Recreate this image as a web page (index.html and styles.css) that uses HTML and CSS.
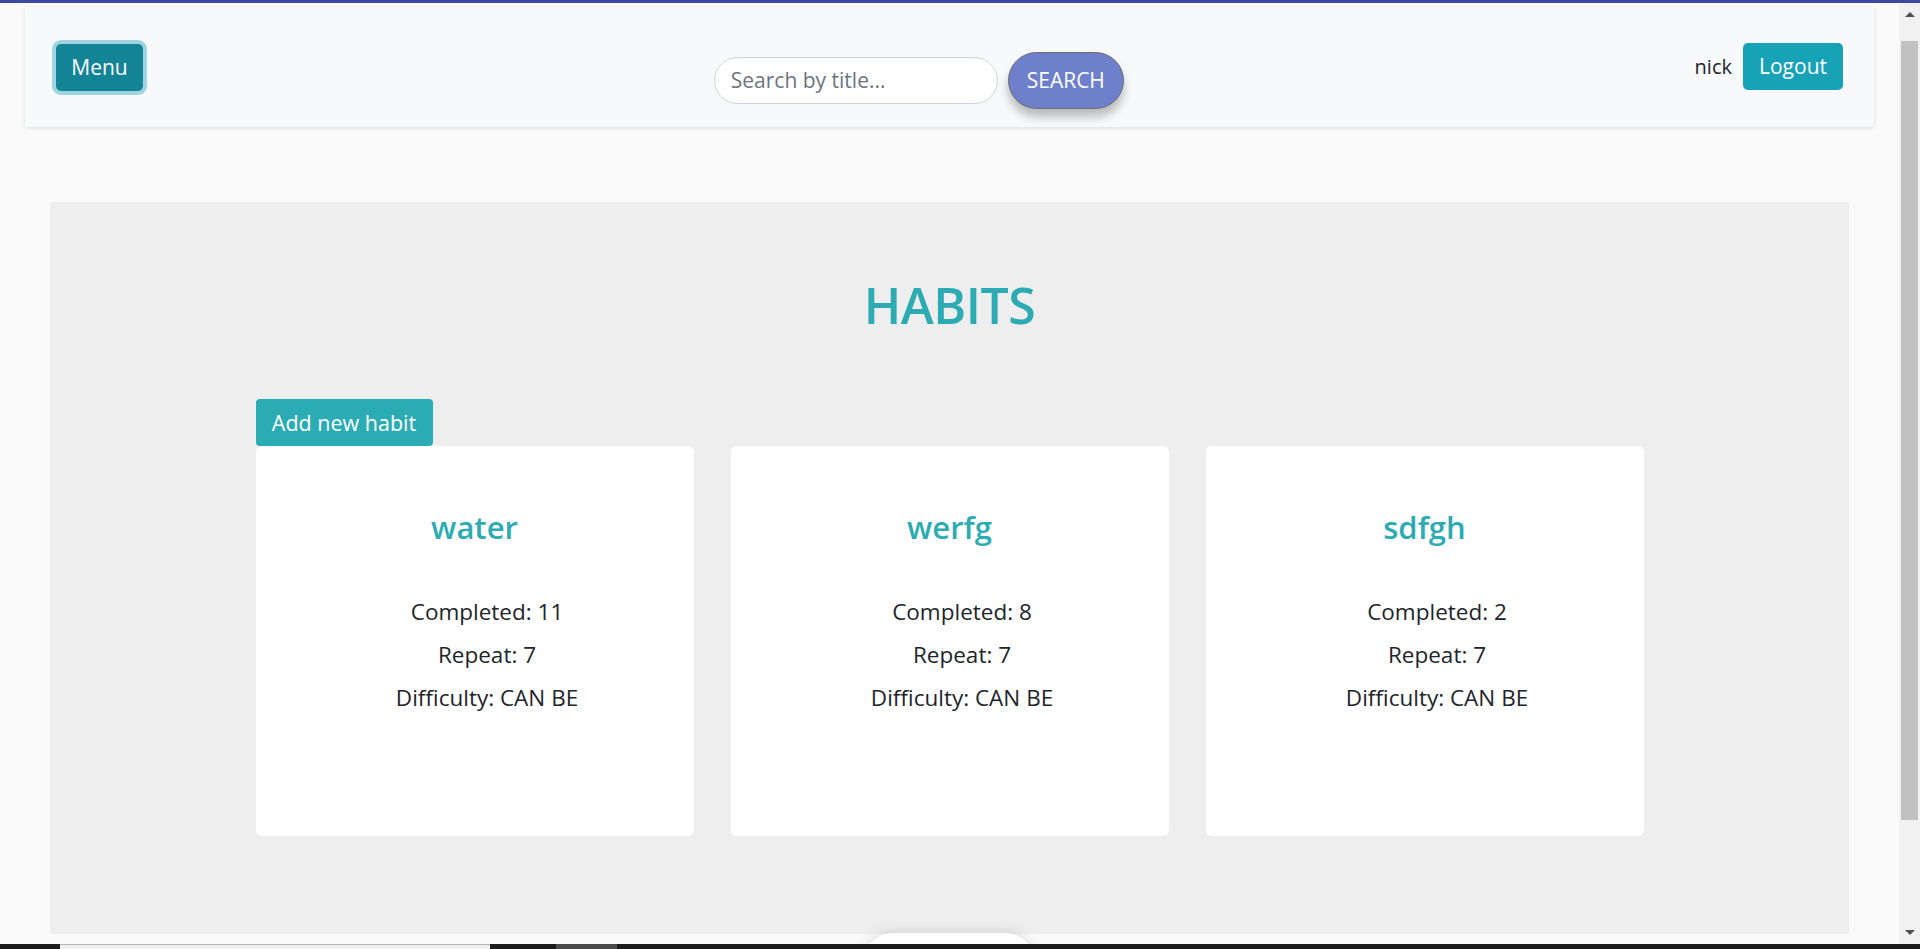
FILE: index.html
```html
<!DOCTYPE html>
<html lang="en">
<head>
<meta charset="utf-8">
<title>Habits</title>
<link rel="stylesheet" href="styles.css">
</head>
<body>
  <div class="topline"></div>
  <div class="window">
    <div class="viewport">
      <nav class="navbar">
        <div class="nav-left">
          <button class="btn btn-menu">Menu</button>
        </div>
        <div class="nav-mid">
          <form class="search">
            <input class="search-input" type="text" placeholder="Search by title...">
            <button class="btn-search" type="button">SEARCH</button>
          </form>
        </div>
        <div class="nav-right">
          <span class="user">nick</span>
          <button class="btn btn-logout">Logout</button>
        </div>
      </nav>

      <main class="panel">
        <h1 class="title">HABITS</h1>
        <div class="container">
          <button class="btn btn-add">Add new habit</button>
          <div class="cards">
            <div class="card">
              <h2 class="card-title">water</h2>
              <p class="line">Completed: 11</p>
              <p class="line">Repeat: 7</p>
              <p class="line">Difficulty: CAN BE</p>
            </div>
            <div class="card">
              <h2 class="card-title">werfg</h2>
              <p class="line">Completed: 8</p>
              <p class="line">Repeat: 7</p>
              <p class="line">Difficulty: CAN BE</p>
            </div>
            <div class="card">
              <h2 class="card-title">sdfgh</h2>
              <p class="line">Completed: 2</p>
              <p class="line">Repeat: 7</p>
              <p class="line">Difficulty: CAN BE</p>
            </div>
          </div>
        </div>
      </main>
      <div class="fab"></div>
    </div>
    <div class="scrollbar">
      <div class="sb-btn"><span class="arrow-up"></span></div>
      <div class="sb-track"><div class="sb-thumb"></div></div>
      <div class="sb-btn"><span class="arrow-down"></span></div>
    </div>
  </div>
  <div class="taskbar">
    <div class="tb-light"></div>
    <div class="tb-gray"></div>
  </div>
</body>
</html>
```

FILE: styles.css
```css
* { box-sizing: border-box; }

html, body {
  margin: 0;
  padding: 0;
  height: 949px;
  overflow: hidden;
}

body {
  display: flex;
  flex-direction: column;
  background: #fafafa;
  font-family: "Open Sans", "Liberation Sans", sans-serif;
  color: #212529;
}

.topline {
  height: 3px;
  flex: none;
  background: #3d47a6;
}

.window {
  flex: 1;
  display: flex;
  min-height: 0;
}

.viewport {
  flex: 1;
  position: relative;
  overflow: hidden;
  background: #fafafa;
}

/* Navbar */
.navbar {
  margin: 4px 25px 0;
  height: 120px;
  background: #f8f9fa;
  box-shadow: 0 1px 4px rgba(0, 0, 0, 0.12);
  display: flex;
  align-items: center;
  padding: 0 31px 0 31px;
}

.btn {
  border: none;
  font-family: inherit;
  font-size: 21px;
  color: #fff;
  height: 47px;
  border-radius: 5px;
  padding: 0 12px;
  cursor: pointer;
  white-space: nowrap;
}

.btn-menu {
  width: 87px;
  background: #138496;
  box-shadow: 0 0 0 4px #9fd5e0;
}

.nav-mid {
  flex: 1;
  display: flex;
  justify-content: center;
  padding-top: 26px;
}

.search {
  display: flex;
  align-items: center;
  gap: 10px;
  margin: 0;
}

.search-input {
  width: 284px;
  height: 47px;
  border: 1px solid #ced4da;
  border-radius: 24px;
  background: #fff;
  padding: 0 16px;
  font-family: inherit;
  font-size: 21px;
  color: #495057;
  outline: none;
}

.search-input::placeholder {
  color: #6c757d;
}

.btn-search {
  width: 116px;
  height: 57px;
  border: 1px solid #6d6d6d;
  border-radius: 29px;
  background: #6e7fcb;
  color: #fff;
  font-family: inherit;
  font-size: 21px;
  box-shadow: 0 8px 10px rgba(0, 0, 0, 0.25);
  padding: 0;
}

.nav-right {
  display: flex;
  align-items: center;
  gap: 11px;
  margin-top: -2px;
}

.user {
  font-size: 20px;
  color: #212529;
}

.btn-logout {
  width: 100px;
  background: #17a2b8;
}

/* Panel */
.panel {
  margin: 75px 50px 0;
  height: 732px;
  background: #eeeeee;
  padding-top: 73px;
}

.title {
  margin: 0;
  text-align: center;
  font-size: 50px;
  line-height: 60px;
  font-weight: 600;
  color: #2cabb3;
  letter-spacing: -0.5px;
}

.container {
  width: 1388px;
  margin: 64px auto 0;
}

.btn-add {
  display: block;
  width: 177px;
  background: #2babb3;
  border-radius: 4px;
  padding: 0;
  font-size: 21.5px;
}

.cards {
  display: grid;
  grid-template-columns: repeat(3, 1fr);
  gap: 37px;
}

.card {
  height: 390px;
  background: #fff;
  border-radius: 6px;
  padding-top: 63px;
  text-align: center;
}

.card-title {
  margin: 0 0 45px;
  font-size: 31px;
  line-height: 36px;
  font-weight: 600;
  color: #2cabb3;
}

.line {
  margin: 0;
  padding-left: 25px;
  font-size: 22.5px;
  line-height: 43px;
  color: #212529;
}

/* floating bump at the bottom */
.fab {
  position: absolute;
  left: 863px;
  top: 930px;
  width: 172px;
  height: 60px;
  border-radius: 30px;
  background: #fff;
  box-shadow: 0 0 14px rgba(0, 0, 0, 0.14);
}

/* Fake scrollbar */
.scrollbar {
  width: 21px;
  flex: none;
  background: #f1f1f1;
  display: flex;
  flex-direction: column;
}

.sb-btn {
  height: 23px;
  display: flex;
  align-items: center;
  justify-content: center;
  flex: none;
}

.arrow-up {
  width: 0;
  height: 0;
  border-left: 5px solid transparent;
  border-right: 5px solid transparent;
  border-bottom: 5px solid #505050;
}

.arrow-down {
  width: 0;
  height: 0;
  border-left: 5px solid transparent;
  border-right: 5px solid transparent;
  border-top: 5px solid #505050;
}

.sb-track {
  flex: 1;
  padding: 15px 2px 0;
}

.sb-thumb {
  height: 779px;
  background: #c1c1c1;
}

/* bottom strip */
.taskbar {
  height: 5px;
  flex: none;
  background: #1c1c1c;
  display: flex;
}

.tb-light {
  margin-left: 60px;
  width: 430px;
  background: #efefef;
  border-top: 1px solid #b5b5b5;
}

.tb-gray {
  margin-left: 66px;
  width: 61px;
  background: #4a4a4a;
}
```
